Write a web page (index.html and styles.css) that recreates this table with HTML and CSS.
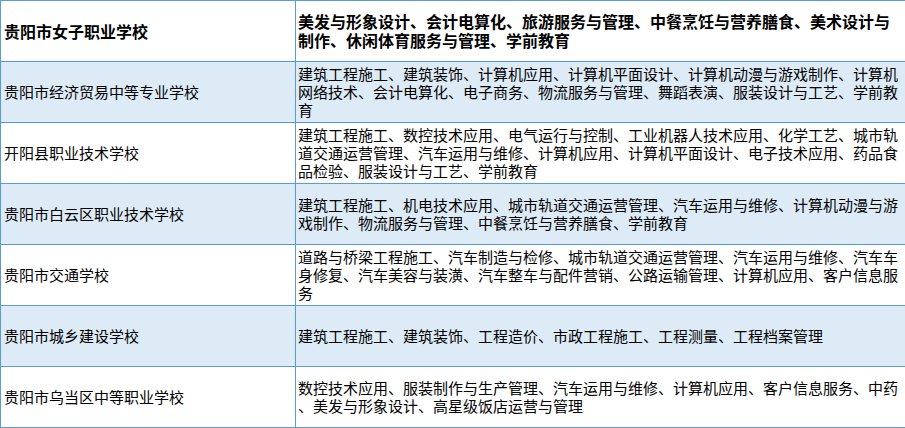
FILE: index.html
```html
<!DOCTYPE html>
<html lang="zh-CN">
<head>
<meta charset="utf-8">
<title>学校专业</title>
<link rel="stylesheet" href="styles.css">
</head>
<body>
<table class="schools">
  <colgroup>
    <col class="col-name">
    <col class="col-majors">
  </colgroup>
  <tbody>
    <tr class="row head">
      <td class="name">贵阳市女子职业学校</td>
      <td class="majors">美发与形象设计、会计电算化、旅游服务与管理、中餐烹饪与营养膳食、美术设计与
制作、休闲体育服务与管理、学前教育</td>
    </tr>
    <tr class="row alt">
      <td class="name">贵阳市经济贸易中等专业学校</td>
      <td class="majors">建筑工程施工、建筑装饰、计算机应用、计算机平面设计、计算机动漫与游戏制作、计算机
网络技术、会计电算化、电子商务、物流服务与管理、舞蹈表演、服装设计与工艺、学前教
育</td>
    </tr>
    <tr class="row">
      <td class="name">开阳县职业技术学校</td>
      <td class="majors">建筑工程施工、数控技术应用、电气运行与控制、工业机器人技术应用、化学工艺、城市轨
道交通运营管理、汽车运用与维修、计算机应用、计算机平面设计、电子技术应用、药品食
品检验、服装设计与工艺、学前教育</td>
    </tr>
    <tr class="row alt">
      <td class="name">贵阳市白云区职业技术学校</td>
      <td class="majors">建筑工程施工、机电技术应用、城市轨道交通运营管理、汽车运用与维修、计算机动漫与游
戏制作、物流服务与管理、中餐烹饪与营养膳食、学前教育</td>
    </tr>
    <tr class="row">
      <td class="name">贵阳市交通学校</td>
      <td class="majors">道路与桥梁工程施工、汽车制造与检修、城市轨道交通运营管理、汽车运用与维修、汽车车
身修复、汽车美容与装潢、汽车整车与配件营销、公路运输管理、计算机应用、客户信息服
务</td>
    </tr>
    <tr class="row alt">
      <td class="name">贵阳市城乡建设学校</td>
      <td class="majors">建筑工程施工、建筑装饰、工程造价、市政工程施工、工程测量、工程档案管理</td>
    </tr>
    <tr class="row">
      <td class="name">贵阳市乌当区中等职业学校</td>
      <td class="majors">数控技术应用、服装制作与生产管理、汽车运用与维修、计算机应用、客户信息服务、中药
、美发与形象设计、高星级饭店运营与管理</td>
    </tr>
  </tbody>
</table>
</body>
</html>
```

FILE: styles.css
```css
html, body {
  margin: 0;
  padding: 0;
  background: #ffffff;
}

body {
  font-family: "Noto Sans CJK SC", "Noto Sans", sans-serif;
  font-size: 15px;
  line-height: 18px;
  color: #000000;
}

.schools {
  width: 905px;
  border-collapse: collapse;
  table-layout: fixed;
}

.col-name {
  width: 295px;
}

.col-majors {
  width: 610px;
}

.schools td {
  border: 1px solid #5b9bd5;
  padding: 0 2px 0 3px;
  vertical-align: middle;
}

.schools td.majors {
  border-right: 2px solid #1c1c1c;
  padding-left: 2px;
  white-space: pre-line;
}

.row {
  height: 61px;
}

.row.head td {
  font-size: 16px;
  line-height: 19px;
  font-weight: bold;
}

.row.alt td {
  background: #ddebf7;
}
```
